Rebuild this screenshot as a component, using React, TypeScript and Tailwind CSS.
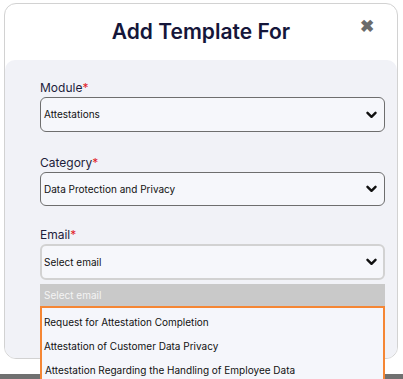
import React from "react";

function Chevron() {
  return (
    <svg width="11" height="8" viewBox="0 0 11 8" className="shrink-0">
      <path d="M1.5 1.8 L5.5 5.8 L9.5 1.8" fill="none" stroke="#111" strokeWidth="2.4" strokeLinecap="round" strokeLinejoin="round" />
    </svg>
  );
}

function Field({ label, value, focused, h, className }: { label: string; value: string; focused?: boolean; h: string; className?: string }) {
  return (
    <div className={"flex flex-col gap-[1px] " + (className ?? "")}>
      <div className="text-[12px] leading-[16px] text-[#1d1d3b]">
        {label}
        <span className="text-[#e11d2a]">*</span>
      </div>
      <div
        className={
          (focused
            ? "rounded-[6px] border-2 border-[#d2d2d2] bg-[#f6f7fb] flex items-center justify-between pl-[2px] pr-[6px] "
            : "rounded-[6px] border border-[#6e6e6e] bg-[#f6f7fb] flex items-center justify-between pl-[3px] pr-[7px] ") + h
        }
      >
        <span className="text-[10px] text-[#111]">{value}</span>
        <Chevron />
      </div>
    </div>
  );
}

export default function App() {
  return (
    <div className="relative w-[403px] h-[379px] overflow-hidden bg-white font-['Inter',sans-serif]">
      <div className="ml-[4px] mr-[5px] mt-[3px] h-[356px] rounded-[12px] border border-[#d2d2d2] bg-white flex flex-col overflow-hidden">
        <div className="relative h-[56px] shrink-0 flex items-center justify-center">
          <h1 className="text-[21px] font-semibold text-[#15163a]">Add Template For</h1>
          <span className="absolute right-[23px] top-[14px] text-[#6b6b6b] text-[17px] font-bold leading-none">✖</span>
        </div>
        <div className="flex-1 rounded-t-[10px] bg-[#f1f2f7] pl-[35px] pr-[12px] pt-[20px] flex flex-col">
          <Field label="Module" value="Attestations" h="h-[35px]" />
          <Field label="Category" value="Data Protection and Privacy" h="h-[34px]" className="mt-[23px]" />
          <Field label="Email" value="Select email" focused h="h-[36px]" className="mt-[21px]" />
        </div>
      </div>
      <div className="absolute left-0 right-0 top-[374px] h-[5px] bg-[#707070]" />
      <div className="absolute left-[40px] w-[345px] top-[284px] flex flex-col">
        <div className="h-[22px] bg-[#c9c9c9] flex items-center pl-[4px] text-[10px] text-[#f4f4f4]">Select email</div>
        <div className="border-2 border-[#f58634] bg-[#f5f6fb] flex flex-col pt-[2px] pb-[4px]">
          <div className="h-[24px] flex items-center pl-[2px] text-[10px] text-[#111]">Request for Attestation Completion</div>
          <div className="h-[24px] flex items-center pl-[2px] text-[10px] text-[#111]">Attestation of Customer Data Privacy</div>
          <div className="h-[24px] flex items-center pl-[3px] text-[10px] text-[#111]">Attestation Regarding the Handling of Employee Data</div>
        </div>
      </div>
    </div>
  );
}
